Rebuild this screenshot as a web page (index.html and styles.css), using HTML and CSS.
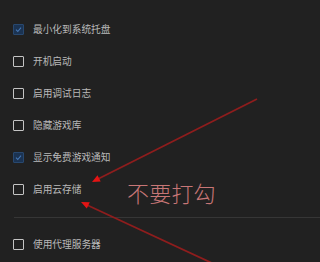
FILE: index.html
```html
<!DOCTYPE html>
<html lang="zh-CN">
<head>
<meta charset="utf-8">
<link rel="stylesheet" href="styles.css">
</head>
<body>
<div class="panel">
  <div class="list">
    <div class="row"><span class="box checked"><svg viewBox="0 0 10 10" class="tick"><path d="M2.2 5.2 L4.2 7.2 L7.8 3" /></svg></span><span class="label">最小化到系统托盘</span></div>
    <div class="row"><span class="box"></span><span class="label">开机启动</span></div>
    <div class="row"><span class="box"></span><span class="label">启用调试日志</span></div>
    <div class="row"><span class="box"></span><span class="label">隐藏游戏库</span></div>
    <div class="row"><span class="box checked"><svg viewBox="0 0 10 10" class="tick"><path d="M2.2 5.2 L4.2 7.2 L7.8 3" /></svg></span><span class="label">显示免费游戏通知</span></div>
    <div class="row"><span class="box"></span><span class="label">启用云存储</span></div>
  </div>
  <div class="divider"></div>
  <div class="list">
    <div class="row"><span class="box"></span><span class="label">使用代理服务器</span></div>
  </div>
</div>
<svg class="arrows" width="290" height="262" viewBox="0 0 290 262">
  <line x1="257" y1="99" x2="98" y2="179" class="shaft"/>
  <polygon points="92,182 97.5,175.3 100.7,181.5" class="head"/>
  <line x1="214" y1="264" x2="87" y2="205" class="shaft"/>
  <polygon points="81,202 89.8,202.2 86.8,208.6" class="head"/>
</svg>
<div class="note">不要打勾</div>
</body>
</html>
```
FILE: styles.css
```css
html, body {
  margin: 0;
  padding: 0;
  background: #212121;
  height: 262px;
  overflow: hidden;
  font-family: "Noto Sans CJK SC", "Noto Sans", sans-serif;
}
.panel {
  padding-top: 13px;
}
.row {
  height: 32px;
  display: flex;
  align-items: center;
  padding-left: 13px;
}
.box {
  width: 9px;
  height: 9px;
  border: 1.5px solid #c4c4c4;
  border-radius: 1px;
  margin-right: 9px;
  display: flex;
  align-items: center;
  justify-content: center;
  flex: none;
}
.box.checked {
  background: #1b3352;
  border-color: #28486f;
}
.tick {
  width: 9px;
  height: 9px;
  fill: none;
  stroke: #4677b4;
  stroke-width: 1.2;
}
.label {
  color: #b9b9b9;
  font-size: 9.7px;
  line-height: 12px;
}
.divider {
  height: 1px;
  background: #363636;
  margin: 12px 0 10px 14px;
}
.arrows {
  position: absolute;
  left: 0;
  top: 0;
}
.shaft {
  stroke: #8e1d1d;
  stroke-width: 1.8;
}
.head {
  fill: #e41414;
}
.note {
  position: absolute;
  left: 127px;
  top: 181px;
  font-size: 22px;
  line-height: 22px;
  font-weight: 300;
  color: #c77676;
  letter-spacing: 0.2px;
}
```
